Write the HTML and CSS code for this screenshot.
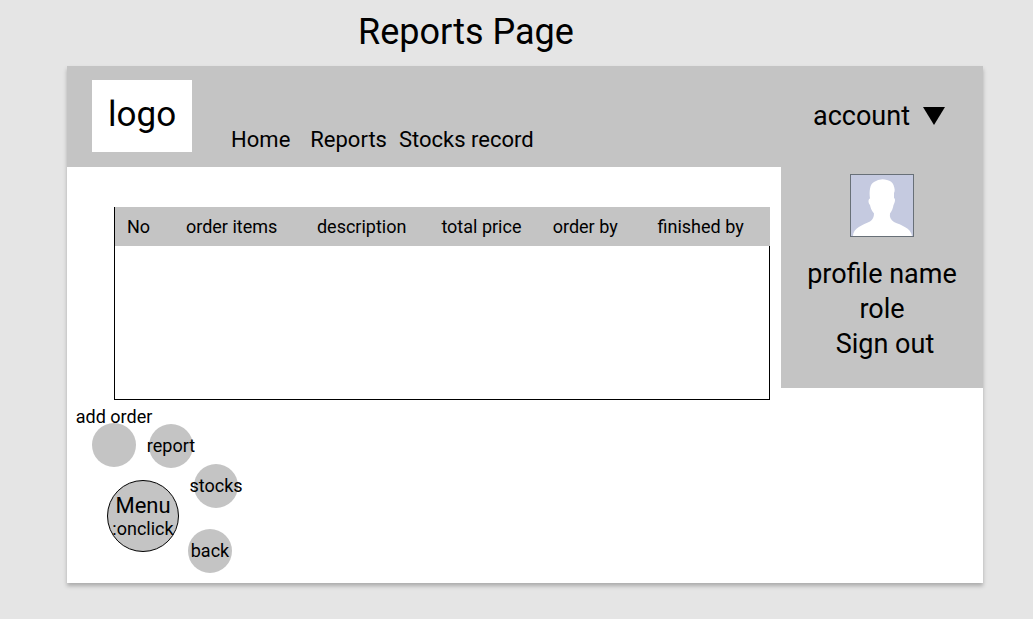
FILE: index.html
```html
<!DOCTYPE html>
<html lang="en">
<head>
<meta charset="utf-8">
<title>Reports Page</title>
<link rel="stylesheet" href="styles.css">
</head>
<body>
<h1 class="page-title">Reports Page</h1>
<div class="frame">
  <header class="header">
    <a class="logo" href="#">logo</a>
    <nav class="nav">
      <a class="nav-link" href="#">Home</a>
      <a class="nav-link" href="#">Reports</a>
      <a class="nav-link" href="#">Stocks record</a>
    </nav>
    <button class="account" type="button">account
      <svg class="caret" viewBox="0 0 22 18" aria-hidden="true"><path d="M0 0h22L11 18z"/></svg>
    </button>
  </header>
  <div class="body">
    <main class="main">
      <table class="orders">
        <thead>
          <tr>
            <th class="col-no">No</th>
            <th class="col-items">order items</th>
            <th class="col-description">description</th>
            <th class="col-price">total price</th>
            <th class="col-order">order by</th>
            <th class="col-finished">finished by</th>
          </tr>
        </thead>
        <tbody>
          <tr><td colspan="6"></td></tr>
        </tbody>
      </table>
      <div class="radial">
        <button class="bubble add" type="button"><span class="add-label">add order</span></button>
        <button class="bubble report" type="button">report</button>
        <button class="bubble stocks" type="button">stocks</button>
        <button class="bubble back" type="button">back</button>
        <button class="menu" type="button">Menu<span class="hint">:onclick</span></button>
      </div>
    </main>
    <aside class="profile">
      <svg class="avatar" viewBox="0 0 64 63" role="img" aria-label="Profile picture">
        <rect x=".5" y=".5" width="63" height="62" fill="#c5cae0" stroke="#687078"/>
        <path fill="#fff" d="M3 62C3 54 13 51 20 47.500Q24 45 24 39.500C21 36 20.500 33 20 31C18 29 18 25 20 24.500C19 17 20 10 24 8Q30 4 37 6Q42 7 43.500 11C45 15 45 17 44 19V24C46 25 44.500 29 43.500 31C43 34 42 37 40 39.500Q39 45 44 48C51 51 61 54 62 62Z"/>
      </svg>
      <div class="profile-name">profile name</div>
      <div>role</div>
      <a class="sign-out" href="#">Sign out</a>
    </aside>
  </div>
</div>
</body>
</html>
```
FILE: styles.css
```css
* {
  box-sizing: border-box;
}

body {
  margin: 0;
  padding: 11px 50px 35px 67px;
  background: #e5e5e5;
  color: #000;
  font-family: Roboto, sans-serif;
}

a {
  color: inherit;
  text-decoration: none;
}

button {
  border: 0;
  padding: 0;
  background: none;
  color: inherit;
  font-family: inherit;
}

.page-title {
  margin: 0 0 13px;
  padding-right: 118px;
  font-size: 36px;
  font-weight: 400;
  line-height: 42px;
  text-align: center;
}

.frame {
  background: #fff;
  box-shadow: 0 3px 4px rgba(0, 0, 0, 0.25);
}

.header {
  display: flex;
  min-height: 101px;
  padding: 14px 0 15px 25px;
  background: #c4c4c4;
}

.logo {
  padding: 14px 16px 16px;
  background: #fff;
  font-size: 35px;
  line-height: 42px;
}

.nav {
  display: flex;
  flex: 1;
  gap: 12px;
  align-items: flex-end;
  padding-left: 39px;
  font-size: 22px;
  line-height: 24px;
}

.nav-link:first-child {
  margin-right: 8px;
}

.account {
  display: flex;
  gap: 13px;
  align-items: center;
  justify-content: center;
  width: 202px;
  padding-right: 6px;
  font-size: 27px;
  line-height: 32px;
}

.caret {
  width: 22px;
  height: 18px;
}

.body {
  display: grid;
  grid-template-columns: 1fr 202px;
  align-items: start;
}

.main {
  padding: 40px 11px 0 47px;
}

.orders {
  width: 100%;
  border-spacing: 0;
  table-layout: fixed;
  border-left: 1px solid #000;
}

.orders th {
  height: 39px;
  padding: 0 0 0 12px;
  background: #c4c4c4;
  font-size: 18px;
  font-weight: 400;
  line-height: 22px;
  text-align: left;
  white-space: nowrap;
}

.orders td {
  height: 154px;
  border-right: 1px solid #000;
  border-bottom: 1px solid #000;
}

.col-no { width: 9%; }
.col-items { width: 20%; }
.col-description { width: 19%; }
.col-price { width: 17%; }
.col-order { width: 16%; }
.col-finished { width: 19%; }

/* Buttons arranged freely round the main menu button */
.radial {
  position: relative;
  height: 183px;
}

.bubble,
.menu {
  position: absolute;
  display: flex;
  align-items: center;
  justify-content: center;
  border-radius: 50%;
  background: #c4c4c4;
  font-size: 18px;
  line-height: 22px;
}

.bubble {
  width: 44px;
  height: 44px;
  white-space: nowrap;
}

.add { left: -22px; top: 23px; }
.report { left: 35px; top: 24px; }
.stocks { left: 80px; top: 64px; }
.back { left: 74px; top: 129px; }

.add-label {
  position: absolute;
  bottom: 39px;
}

.menu {
  left: -7px;
  top: 80px;
  flex-direction: column;
  width: 72px;
  height: 72px;
  padding-top: 2px;
  border: 1px solid #000;
  font-size: 22px;
  line-height: 24px;
}

.hint {
  font-size: 18px;
  line-height: 22px;
}

.profile {
  display: flex;
  flex-direction: column;
  align-items: center;
  padding: 7px 0 26px;
  background: #c4c4c4;
  font-size: 27px;
  line-height: 35px;
}

.avatar {
  width: 64px;
  height: 63px;
  margin-bottom: 20px;
}

.sign-out {
  padding-left: 6px;
}
```
